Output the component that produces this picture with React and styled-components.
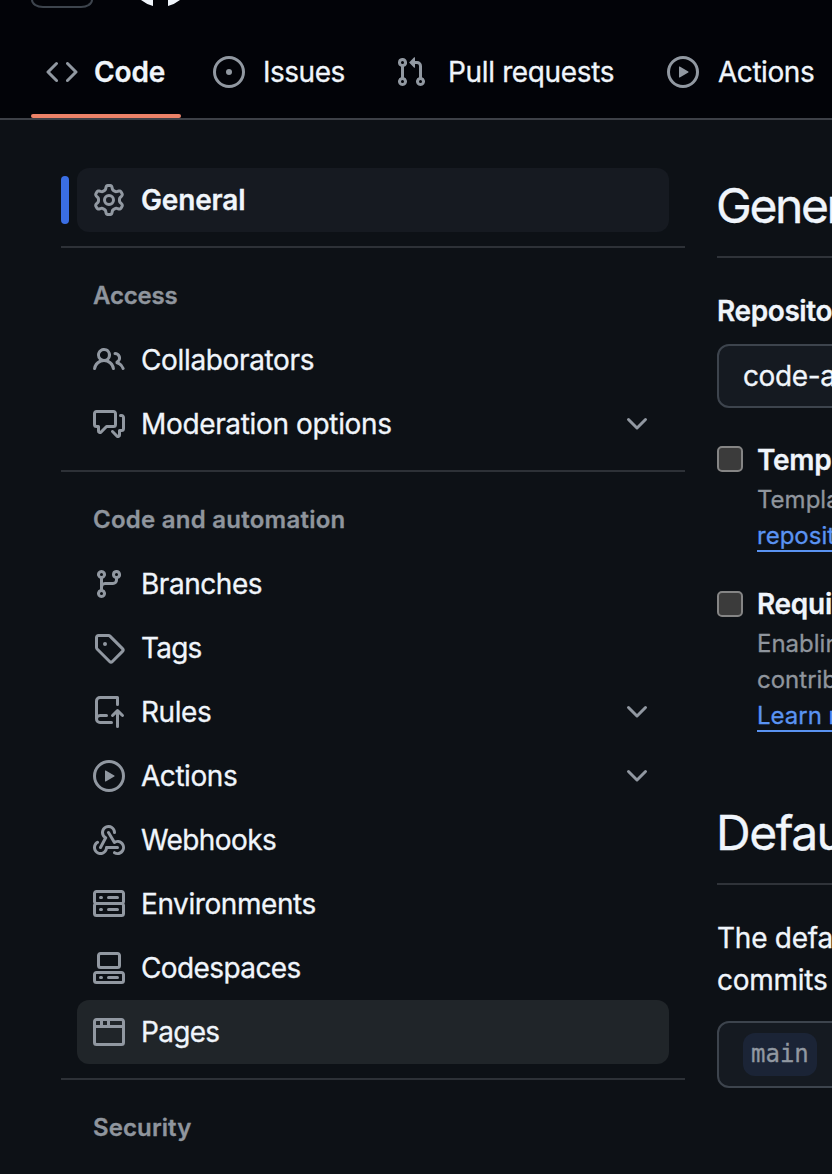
import React from "react";
import styled, { createGlobalStyle } from "styled-components";

const GlobalStyle = createGlobalStyle`
  *, *::before, *::after { box-sizing: border-box; }
  html, body { margin: 0; background: #0d1116; }
  body {
    overflow: hidden;
    color: #f0f5fb;
    font-family: Inter, "Liberation Sans", sans-serif;
    font-size: 28px;
    -webkit-font-smoothing: antialiased;
    -webkit-text-stroke-width: 0.3px;
  }
  h2, h3, p, ul { margin: 0; padding: 0; font: inherit; }
`;

const ICONS = {
  code: ["m11.28 3.22 4.25 4.25a.75.75 0 0 1 0 1.06l-4.25 4.25a.749.749 0 0 1-1.275-.326.749.749 0 0 1 .215-.734L13.94 8l-3.72-3.72a.749.749 0 0 1 .326-1.275.749.749 0 0 1 .734.215Zm-6.56 0a.751.751 0 0 1 1.042.018.751.751 0 0 1 .018 1.042L2.06 8l3.72 3.72a.749.749 0 0 1-.326 1.275.749.749 0 0 1-.734-.215L.47 8.53a.75.75 0 0 1 0-1.06Z"],
  issue: ["M8 9.5a1.5 1.5 0 1 0 0-3 1.5 1.5 0 0 0 0 3Z", "M8 0a8 8 0 1 1 0 16A8 8 0 0 1 8 0ZM1.5 8a6.5 6.5 0 1 0 13 0 6.5 6.5 0 0 0-13 0Z"],
  pull: ["M1.5 3.25a2.25 2.25 0 1 1 3 2.122v5.256a2.251 2.251 0 1 1-1.5 0V5.372A2.25 2.25 0 0 1 1.5 3.25Zm5.677-.177L9.573.677A.25.25 0 0 1 10 .854V2.5h1A2.5 2.5 0 0 1 13.5 5v5.628a2.251 2.251 0 1 1-1.5 0V5a1 1 0 0 0-1-1h-1v1.646a.25.25 0 0 1-.427.177L7.177 3.427a.25.25 0 0 1 0-.354ZM3.75 2.5a.75.75 0 1 0 0 1.5.75.75 0 0 0 0-1.5Zm0 9.5a.75.75 0 1 0 0 1.5.75.75 0 0 0 0-1.5Zm8.25.75a.75.75 0 1 0 1.5 0 .75.75 0 0 0-1.5 0Z"],
  play: ["M8 0a8 8 0 1 1 0 16A8 8 0 0 1 8 0ZM1.5 8a6.5 6.5 0 1 0 13 0 6.5 6.5 0 0 0-13 0Zm4.879-2.773 4.264 2.559a.25.25 0 0 1 0 .428l-4.264 2.559A.25.25 0 0 1 6 10.559V5.442a.25.25 0 0 1 .379-.215Z"],
  gear: ["M8 0a8.2 8.2 0 0 1 .701.031C9.444.095 9.99.645 10.16 1.29l.288 1.107c.018.066.079.158.212.224.231.114.454.243.668.386.123.082.233.09.299.071l1.103-.303c.644-.176 1.392.021 1.82.63.27.385.506.792.704 1.218.315.675.111 1.422-.364 1.891l-.814.806c-.049.048-.098.147-.088.294.016.257.016.515 0 .772-.01.147.038.246.088.294l.814.806c.475.469.679 1.216.364 1.891a7.977 7.977 0 0 1-.704 1.217c-.428.61-1.176.807-1.82.63l-1.102-.302c-.067-.019-.177-.011-.3.071a5.909 5.909 0 0 1-.668.386c-.133.066-.194.158-.211.224l-.29 1.106c-.168.646-.715 1.196-1.458 1.26a8.006 8.006 0 0 1-1.402 0c-.743-.064-1.289-.614-1.458-1.26l-.289-1.106c-.018-.066-.079-.158-.212-.224a5.738 5.738 0 0 1-.668-.386c-.123-.082-.233-.09-.299-.071l-1.103.303c-.644.176-1.392-.021-1.82-.63a8.12 8.12 0 0 1-.704-1.218c-.315-.675-.111-1.422.363-1.891l.815-.806c.05-.048.098-.147.088-.294a6.214 6.214 0 0 1 0-.772c.01-.147-.038-.246-.088-.294l-.815-.806C.635 6.045.431 5.298.746 4.623a7.92 7.92 0 0 1 .704-1.217c.428-.61 1.176-.807 1.82-.63l1.102.302c.067.019.177.011.3-.071.214-.143.437-.272.668-.386.133-.066.194-.158.211-.224l.29-1.106C6.009.645 6.556.095 7.299.03 7.53.01 7.764 0 8 0Zm-.571 1.525c-.036.003-.108.036-.137.146l-.289 1.105c-.147.561-.549.967-.998 1.189-.173.086-.34.183-.5.29-.417.278-.97.423-1.529.27l-1.103-.303c-.109-.03-.175.016-.195.045-.22.312-.412.644-.573.99-.014.031-.021.11.059.19l.815.806c.411.406.562.957.53 1.456a4.709 4.709 0 0 0 0 .582c.032.499-.119 1.05-.53 1.456l-.815.806c-.081.08-.073.159-.059.19.162.346.353.677.573.989.02.03.085.076.195.046l1.102-.303c.56-.153 1.113-.008 1.53.27.161.107.328.204.501.29.447.222.85.629.997 1.189l.289 1.105c.029.109.101.143.137.146a6.6 6.6 0 0 0 1.142 0c.036-.003.108-.036.137-.146l.289-1.105c.147-.561.549-.967.998-1.189.173-.086.34-.183.5-.29.417-.278.97-.423 1.529-.27l1.103.303c.109.029.175-.016.195-.045.22-.313.411-.644.573-.99.014-.031.021-.11-.059-.19l-.815-.806c-.411-.406-.562-.957-.53-1.456a4.709 4.709 0 0 0 0-.582c-.032-.499.119-1.05.53-1.456l.815-.806c.081-.08.073-.159.059-.19a6.464 6.464 0 0 0-.573-.989c-.02-.03-.085-.076-.195-.046l-1.102.303c-.56.153-1.113.008-1.53-.27a4.44 4.44 0 0 0-.501-.29c-.447-.222-.85-.629-.997-1.189l-.289-1.105c-.029-.11-.101-.143-.137-.146a6.6 6.6 0 0 0-1.142 0ZM11 8a3 3 0 1 1-6 0 3 3 0 0 1 6 0ZM9.5 8a1.5 1.5 0 1 0-3.001.001A1.5 1.5 0 0 0 9.5 8Z"],
  people: ["M2 5.5a3.5 3.5 0 1 1 5.898 2.549 5.508 5.508 0 0 1 3.034 4.084.75.75 0 1 1-1.482.235 4 4 0 0 0-7.9 0 .75.75 0 0 1-1.482-.236A5.507 5.507 0 0 1 3.102 8.05 3.493 3.493 0 0 1 2 5.5ZM11 4a3.001 3.001 0 0 1 2.22 5.018 5.01 5.01 0 0 1 2.56 3.012.749.749 0 0 1-.885.954.752.752 0 0 1-.549-.514 3.507 3.507 0 0 0-2.522-2.372.75.75 0 0 1-.574-.73v-.352a.75.75 0 0 1 .416-.672A1.5 1.5 0 0 0 11 5.5.75.75 0 0 1 11 4Zm-5.5-.5a2 2 0 1 0-.001 3.999A2 2 0 0 0 5.5 3.5Z"],
  discussion: ["M1.75 1h8.5c.966 0 1.75.784 1.75 1.75v5.5A1.75 1.75 0 0 1 10.25 10H7.061l-2.574 2.573A1.458 1.458 0 0 1 2 11.543V10h-.25A1.75 1.75 0 0 1 0 8.25v-5.5C0 1.784.784 1 1.75 1ZM1.5 2.75v5.5c0 .138.112.25.25.25h1a.75.75 0 0 1 .75.75v2.19l2.72-2.72a.749.749 0 0 1 .53-.22h3.5a.25.25 0 0 0 .25-.25v-5.5a.25.25 0 0 0-.25-.25h-8.5a.25.25 0 0 0-.25.25Zm13 2a.25.25 0 0 0-.25-.25h-.5a.75.75 0 0 1 0-1.5h.5c.966 0 1.75.784 1.75 1.75v5.5A1.75 1.75 0 0 1 14.25 12H14v1.543a1.458 1.458 0 0 1-2.487 1.03L9.22 12.28a.749.749 0 0 1 .326-1.275.749.749 0 0 1 .734.215l2.22 2.22v-2.19a.75.75 0 0 1 .75-.75h1a.25.25 0 0 0 .25-.25Z"],
  branch: ["M9.5 3.25a2.25 2.25 0 1 1 3 2.122V6A2.5 2.5 0 0 1 10 8.5H6a1 1 0 0 0-1 1v1.128a2.251 2.251 0 1 1-1.5 0V5.372a2.25 2.25 0 1 1 1.5 0v1.836A2.493 2.493 0 0 1 6 7h4a1 1 0 0 0 1-1v-.628A2.25 2.25 0 0 1 9.5 3.25Zm-6 0a.75.75 0 1 0 1.5 0 .75.75 0 0 0-1.5 0Zm8.25-.75a.75.75 0 1 0 0 1.5.75.75 0 0 0 0-1.5ZM4.25 12a.75.75 0 1 0 0 1.5.75.75 0 0 0 0-1.5Z"],
  tag: ["M1 7.775V2.75C1 1.784 1.784 1 2.75 1h5.025c.464 0 .91.184 1.238.513l6.25 6.25a1.75 1.75 0 0 1 0 2.474l-5.026 5.026a1.75 1.75 0 0 1-2.474 0l-6.25-6.25A1.752 1.752 0 0 1 1 7.775Zm1.5 0c0 .066.026.13.073.177l6.25 6.25a.25.25 0 0 0 .354 0l5.025-5.025a.25.25 0 0 0 0-.354l-6.25-6.25a.25.25 0 0 0-.177-.073H2.75a.25.25 0 0 0-.25.25ZM6 5a1 1 0 1 1 0 2 1 1 0 0 1 0-2Z"],
  rules: ["M1 2.5A2.5 2.5 0 0 1 3.5 0h8.75a.75.75 0 0 1 .75.75v3.5a.75.75 0 0 1-1.5 0V1.5h-8a1 1 0 0 0-1 1v6.708A2.493 2.493 0 0 1 3.5 9h3.25a.75.75 0 0 1 0 1.5H3.5a1 1 0 0 0 0 2h5.75a.75.75 0 0 1 0 1.5H3.5A2.5 2.5 0 0 1 1 11.5Zm13.23 7.79h-.001l-1.224-1.224v6.184a.75.75 0 0 1-1.5 0V9.066L10.28 10.29a.75.75 0 0 1-1.06-1.061l2.505-2.504a.75.75 0 0 1 1.06 0L15.29 9.23a.751.751 0 0 1-.018 1.042.751.751 0 0 1-1.042.018Z"],
  webhook: ["M5.5 4.25a2.25 2.25 0 0 1 4.5 0 .75.75 0 0 0 1.5 0 3.75 3.75 0 1 0-6.14 2.889l-2.272 4.258a.75.75 0 0 0 1.324.706L7 7.25a.75.75 0 0 0-.309-1.015A2.25 2.25 0 0 1 5.5 4.25Z", "M7.364 3.607a.75.75 0 0 1 1.03.257l2.608 4.349a3.75 3.75 0 1 1-.628 6.785.75.75 0 0 1 .752-1.299 2.25 2.25 0 1 0-.033-3.88.75.75 0 0 1-1.03-.256L7.107 4.636a.75.75 0 0 1 .257-1.03Z", "M2.9 8.776A.75.75 0 0 1 2.625 9.8 2.25 2.25 0 1 0 6 11.75a.75.75 0 0 1 .75-.751h5.5a.75.75 0 0 1 0 1.5H7.425a3.751 3.751 0 1 1-5.55-3.998.75.75 0 0 1 1.024.274Z"],
  server: ["M1.75 1h12.5c.966 0 1.75.784 1.75 1.75v4c0 .372-.116.717-.314 1 .198.283.314.628.314 1v4a1.75 1.75 0 0 1-1.75 1.75H1.75A1.75 1.75 0 0 1 0 12.75v-4c0-.358.109-.707.314-1a1.739 1.739 0 0 1-.314-1v-4C0 1.784.784 1 1.75 1ZM1.5 2.75v4c0 .138.112.25.25.25h12.5a.25.25 0 0 0 .25-.25v-4a.25.25 0 0 0-.25-.25H1.75a.25.25 0 0 0-.25.25Zm.25 5.75a.25.25 0 0 0-.25.25v4c0 .138.112.25.25.25h12.5a.25.25 0 0 0 .25-.25v-4a.25.25 0 0 0-.25-.25ZM7 4.75A.75.75 0 0 1 7.75 4h4.5a.75.75 0 0 1 0 1.5h-4.5A.75.75 0 0 1 7 4.75ZM7.75 10h4.5a.75.75 0 0 1 0 1.5h-4.5a.75.75 0 0 1 0-1.5ZM3 4.75A.75.75 0 0 1 3.75 4h.5a.75.75 0 0 1 0 1.5h-.5A.75.75 0 0 1 3 4.75ZM3.75 10h.5a.75.75 0 0 1 0 1.5h-.5a.75.75 0 0 1 0-1.5Z"],
  codespaces: ["M0 11.25c0-.966.784-1.75 1.75-1.75h12.5c.966 0 1.75.784 1.75 1.75v3A1.75 1.75 0 0 1 14.25 16H1.75A1.75 1.75 0 0 1 0 14.25Zm2-9.5C2 .784 2.784 0 3.75 0h8.5C13.216 0 14 .784 14 1.75v5a1.75 1.75 0 0 1-1.75 1.75h-8.5A1.75 1.75 0 0 1 2 6.75Zm1.75-.25a.25.25 0 0 0-.25.25v5c0 .138.112.25.25.25h8.5a.25.25 0 0 0 .25-.25v-5a.25.25 0 0 0-.25-.25Zm-2 9.5a.25.25 0 0 0-.25.25v3c0 .138.112.25.25.25h12.5a.25.25 0 0 0 .25-.25v-3a.25.25 0 0 0-.25-.25Z", "M7 12.75a.75.75 0 0 1 .75-.75h4.5a.75.75 0 0 1 0 1.5h-4.5a.75.75 0 0 1-.75-.75Zm-4 0a.75.75 0 0 1 .75-.75h.5a.75.75 0 0 1 0 1.5h-.5a.75.75 0 0 1-.75-.75Z"],
  browser: ["M0 2.75C0 1.784.784 1 1.75 1h12.5c.966 0 1.75.784 1.75 1.75v10.5A1.75 1.75 0 0 1 14.25 15H1.75A1.75 1.75 0 0 1 0 13.25ZM14.5 6h-13v7.25c0 .138.112.25.25.25h12.5a.25.25 0 0 0 .25-.25Zm-6-3.5v2h6V2.75a.25.25 0 0 0-.25-.25ZM5 2.5v2h2v-2Zm-3.25 0a.25.25 0 0 0-.25.25V4.5h2v-2Z"],
  chevron: ["M12.78 5.22a.749.749 0 0 1 0 1.06l-4.25 4.25a.749.749 0 0 1-1.06 0L3.22 6.28a.749.749 0 1 1 1.06-1.06L8 8.939l3.72-3.719a.749.749 0 0 1 1.06 0Z"],
};

const IconSvg = styled.svg`
  flex: none;
  width: 32px;
  height: 32px;
  fill: #9198a1;
`;

const Icon = ({ name }) => (
  <IconSvg viewBox="0 0 16 16" aria-hidden="true">
    {ICONS[name].map((d) => <path key={d} d={d} />)}
  </IconSvg>
);

const Page = styled.div`
  width: 832px;
  height: 1174px;
  overflow: hidden;
  display: flex;
  flex-direction: column;
`;

const Header = styled.header`
  flex: none;
  height: 120px;
  background: #020308;
  border-bottom: 2px solid #3d4047;
`;

const TopBar = styled.div`
  height: 26px;
  padding-left: 31px;
  display: flex;
  align-items: flex-start;
  gap: 46px;
`;

const MenuButton = styled.div`
  width: 62px;
  height: 8px;
  border: 2px solid #3d444d;
  border-top: 0;
  border-radius: 0 0 12px 12px / 0 0 8px 8px;
`;

const Logo = styled.svg`
  width: 42px;
  height: 7px;
  fill: #f0f5fb;
`;

const Tabs = styled.nav`
  height: 92px;
  padding-left: 30px;
  display: flex;
  white-space: nowrap;
`;

const Tab = styled.a`
  flex: none;
  width: ${(p) => p.$width}px;
  height: 92px;
  padding: 0 0 0 16px;
  display: flex;
  flex-direction: column;
  justify-content: flex-end;
  letter-spacing: ${(p) => p.$spacing}px;
  font-weight: ${(p) => (p.$active ? 600 : 400)};
`;

const TabLabel = styled.span`
  height: 84px;
  display: flex;
  align-items: center;
  gap: ${(p) => p.$gap}px;
`;

const TabLine = styled.span`
  height: 4px;
  margin-left: -15.5px;
  width: 150px;
  border-radius: 2px;
  background: ${(p) => (p.$active ? "#ec8268" : "transparent")};
`;

const Body = styled.div`
  flex: 1;
  min-height: 0;
  padding: 48px 0 0 61px;
  display: flex;
  gap: 32px;
  overflow: hidden;
`;

const Sidebar = styled.aside`
  flex: none;
  width: 624px;
`;

const Group = styled.section`
  & + & {
    margin-top: 14px;
    border-top: 2px solid #2d3137;
  }
`;

const GroupTitle = styled.h3`
  height: 80px;
  padding: 16px 32px 0;
  line-height: 64px;
  font-size: 24px;
  font-weight: 600;
  letter-spacing: ${(p) => p.$spacing}px;
  color: #8f959d;
`;

const ItemRow = styled.div`
  display: flex;
  align-items: center;
  gap: 8px;
`;

const Marker = styled.span`
  flex: none;
  width: 8px;
  height: 48px;
  border-radius: 4px;
  background: ${(p) => (p.$active ? "#3a6ee4" : "transparent")};
`;

const Item = styled.a`
  width: 592px;
  height: 64px;
  padding: 0 16px;
  display: flex;
  align-items: center;
  gap: 16px;
  border-radius: 12px;
  letter-spacing: ${(p) => p.$spacing}px;
  font-weight: ${(p) => (p.$active ? 600 : 400)};
  background: ${(p) => (p.$active ? "#161a21" : p.$hover ? "#202529" : "transparent")};
`;

const ItemText = styled.span`
  flex: 1;
`;

const Main = styled.main`
  flex: 1;
  min-width: 0;
  overflow: hidden;
  white-space: nowrap;
`;

const Title = styled.h2`
  height: 90px;
  line-height: 75px;
  font-size: 48px;
  letter-spacing: ${(p) => p.$spacing}px;
  text-indent: -1px;
  border-bottom: 2px solid #2f3339;
`;

const Label = styled.div`
  margin-top: 32px;
  line-height: 42px;
  font-weight: 600;
  letter-spacing: -0.4px;
`;

const Field = styled.div`
  width: 420px;
  height: ${(p) => p.$height}px;
  margin-top: ${(p) => p.$top}px;
  padding-left: 24px;
  display: flex;
  align-items: center;
  border: 2px solid #3d444d;
  border-radius: 12px;
  background: #151a21;
  letter-spacing: -0.4px;
`;

const Option = styled.div`
  margin-top: ${(p) => p.$top}px;
  display: flex;
  gap: 14px;
`;

const Checkbox = styled.span`
  flex: none;
  width: 26px;
  height: 26px;
  margin-top: ${(p) => p.$top}px;
  border: 2px solid #858585;
  border-radius: 5px;
  background: #3b3b3b;
`;

const OptionTitle = styled.div`
  line-height: 42px;
  font-weight: 600;
  letter-spacing: -0.3px;
`;

const OptionNote = styled.p`
  padding-top: 1px;
  line-height: 36px;
  font-size: 24px;
  color: #8f959d;
`;

const NoteLink = styled.a`
  color: #5a93f2;
  text-decoration: underline;
  text-decoration-thickness: 2px;
  text-underline-offset: 6px;
  text-decoration-skip-ink: none;
`;

const Section = styled.section`
  margin-top: ${(p) => p.$top}px;
`;

const Paragraph = styled.p`
  margin-top: 32px;
  line-height: 42px;
  letter-spacing: -0.25px;
`;

const BranchName = styled.span`
  height: 43px;
  padding: 0 8px;
  border-radius: 12px;
  line-height: 43px;
  font-family: "DejaVu Sans Mono", monospace;
  font-size: 24px;
  letter-spacing: 0;
  color: #9198a1;
  background: #1b2436;
`;

const TABS = [
  { icon: "code", text: "Code", width: 167, gap: 16, spacing: -0.1, active: true },
  { icon: "issue", text: "Issues", width: 182, gap: 18, spacing: -0.5 },
  { icon: "pull", text: "Pull requests", width: 272, gap: 21, spacing: -0.35 },
  { icon: "play", text: "Actions", width: 180, gap: 19, spacing: -0.45 },
];

const GROUPS = [
  { items: [{ icon: "gear", text: "General", active: true, spacing: -0.15 }] },
  {
    title: "Access",
    spacing: -0.2,
    items: [
      { icon: "people", text: "Collaborators", spacing: -0.35 },
      { icon: "discussion", text: "Moderation options", spacing: -0.35, menu: true },
    ],
  },
  {
    title: "Code and automation",
    spacing: 0.25,
    items: [
      { icon: "branch", text: "Branches", spacing: -0.45 },
      { icon: "tag", text: "Tags", spacing: -0.8 },
      { icon: "rules", text: "Rules", spacing: -0.45, menu: true },
      { icon: "play", text: "Actions", spacing: -0.45, menu: true },
      { icon: "webhook", text: "Webhooks", spacing: -0.6 },
      { icon: "server", text: "Environments", spacing: -0.42 },
      { icon: "codespaces", text: "Codespaces", spacing: -0.6 },
      { icon: "browser", text: "Pages", spacing: -0.7, hover: true },
    ],
  },
  { title: "Security", spacing: 0.1, items: [] },
];

export default function App() {
  return (
    <Page>
      <GlobalStyle />
      <Header>
        <TopBar>
          <MenuButton />
          <Logo viewBox="0 0 42 7">
            <path d="M2 0H14V6Q7 4 2 0ZM29 0H41Q36 4 29 6Z" />
          </Logo>
        </TopBar>
        <Tabs>
          {TABS.map((t) => (
            <Tab key={t.text} $width={t.width} $spacing={t.spacing} $active={t.active}>
              <TabLabel $gap={t.gap}>
                <Icon name={t.icon} />
                <span>{t.text}</span>
              </TabLabel>
              <TabLine $active={t.active} />
            </Tab>
          ))}
        </Tabs>
      </Header>
      <Body>
        <Sidebar>
          {GROUPS.map((g, i) => (
            <Group key={i}>
              {g.title && <GroupTitle $spacing={g.spacing}>{g.title}</GroupTitle>}
              {g.items.map((it) => (
                <ItemRow key={it.text}>
                  <Marker $active={it.active} />
                  <Item $active={it.active} $hover={it.hover} $spacing={it.spacing}>
                    <Icon name={it.icon} />
                    <ItemText>{it.text}</ItemText>
                    {it.menu && <Icon name="chevron" />}
                  </Item>
                </ItemRow>
              ))}
            </Group>
          ))}
        </Sidebar>
        <Main>
          <Title $spacing={-2.4}>General</Title>
          <Label>Repository name</Label>
          <Field $height={64} $top={12}>code-a</Field>
          <Option $top={31}>
            <Checkbox $top={7} />
            <div>
              <OptionTitle>Template repository</OptionTitle>
              <OptionNote>
                Template repositories
                <br />
                <NoteLink>repository</NoteLink>
              </OptionNote>
            </div>
          </Option>
          <Option $top={29}>
            <Checkbox $top={8} />
            <div>
              <OptionTitle>Require contributors</OptionTitle>
              <OptionNote>
                Enabling
                <br />
                contributors
                <br />
                <NoteLink>Learn more</NoteLink>
              </OptionNote>
            </div>
          </Option>
          <Section $top={61}>
            <Title $spacing={-1.5}>Default branch</Title>
            <Paragraph>
              The default
              <br />
              commits
            </Paragraph>
            <Field $height={67} $top={20}>
              <BranchName>main</BranchName>
            </Field>
          </Section>
        </Main>
      </Body>
    </Page>
  );
}
